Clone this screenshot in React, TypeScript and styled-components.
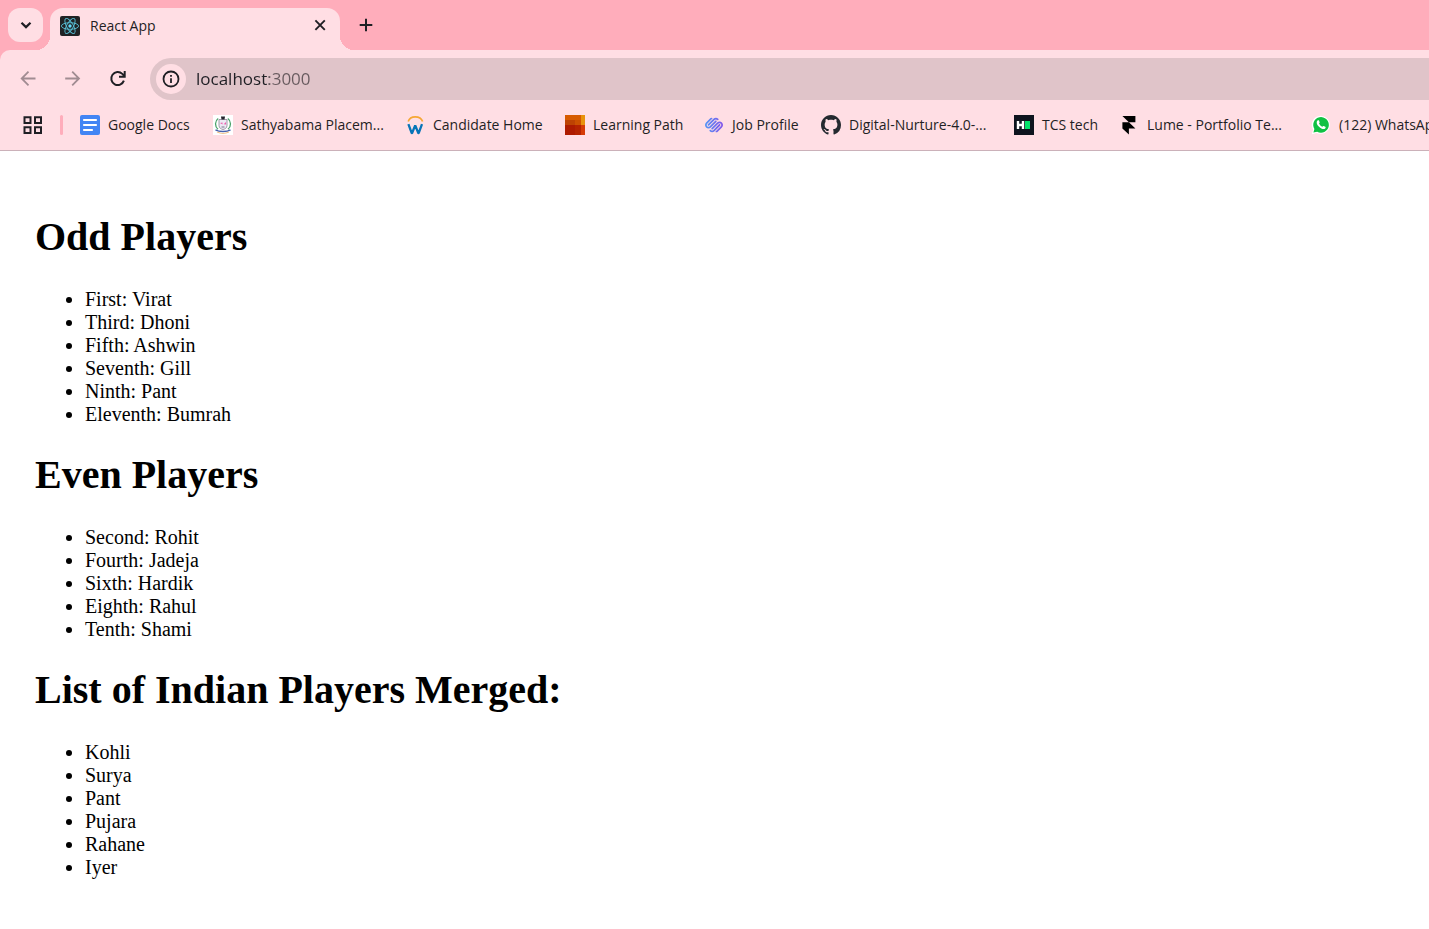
import React from 'react';
import styled, { createGlobalStyle } from 'styled-components';
import { SiSquarespace } from 'react-icons/si';

const GlobalStyle = createGlobalStyle`
  * { box-sizing: border-box; }
  body { margin: 0; background: #ffffff; }
`;

const uiFont = `"Open Sans", "Noto Sans", sans-serif`;
const strip = '#ffadbb';
const surface = '#ffdee4';
const ink = '#1f1f24';

const TabStrip = styled.div`
  display: flex;
  align-items: flex-end;
  height: 50px;
  padding-left: 8px;
  background: ${strip};
  font-family: ${uiFont};
`;

const IconButton = styled.button<{ $muted?: boolean }>`
  display: flex;
  align-items: center;
  justify-content: center;
  flex: none;
  width: 45px;
  height: 42px;
  padding: 0;
  border: 0;
  background: none;
  color: ${(p) => (p.$muted ? '#a18c92' : ink)};
`;

const SearchTabs = styled(IconButton)`
  width: 35px;
  height: 34px;
  margin: 0 7px 8px 0;
  border-radius: 12px;
  background: ${surface};
`;

const Tab = styled.div`
  position: relative;
  display: flex;
  align-items: center;
  width: 290px;
  height: 42px;
  padding: 0 6px 6px 10px;
  border-radius: 13px 13px 0 0;
  background: ${surface};
  color: ${ink};
  font-size: 14px;
  line-height: 20px;

  &::before,
  &::after {
    content: '';
    position: absolute;
    bottom: 0;
    width: 14px;
    height: 14px;
  }
  &::before {
    right: 100%;
    background: radial-gradient(circle at 0 0, transparent 14px, ${surface} 14px);
  }
  &::after {
    left: 100%;
    background: radial-gradient(circle at 100% 0, transparent 14px, ${surface} 14px);
  }
`;

const TabTitle = styled.span`
  flex: 1;
  margin-left: 10px;
`;

const TabClose = styled(IconButton)`
  width: 28px;
  height: 28px;
`;

const NewTab = styled(IconButton)`
  width: 32px;
  height: 34px;
  margin: 0 0 8px 10px;
`;

const ToolbarBack = styled.div`
  background: ${strip};
`;

const Toolbar = styled.div`
  overflow: hidden;
  border-radius: 10px 0 0 0;
  border-bottom: 1px solid #cbb1b9;
  background: ${surface};
  font-family: ${uiFont};
`;

const NavRow = styled.div`
  display: flex;
  align-items: center;
  padding: 8px 0 0 5px;
`;

const AddressBar = styled.div`
  display: flex;
  align-items: center;
  flex: 1;
  height: 42px;
  margin-left: 10px;
  padding-left: 6px;
  border-radius: 21px 0 0 21px;
  background: #e0c4c9;
`;

const SiteInfo = styled(IconButton)`
  width: 30px;
  height: 30px;
  border-radius: 50%;
  background: ${surface};
`;

const AddressInput = styled.input`
  flex: 1;
  min-width: 0;
  height: 28px;
  margin-left: 10px;
  padding: 0;
  border: 0;
  outline: 0;
  font: 17px/28px ${uiFont};
  color: ${ink};
  background: linear-gradient(90deg, ${ink} 73px, #675a5e 73px);
  -webkit-background-clip: text;
  background-clip: text;
  -webkit-text-fill-color: transparent;
`;

const BookmarkBar = styled.nav`
  display: flex;
  align-items: center;
  height: 50px;
  padding-left: 10px;
`;

const Divider = styled.span`
  flex: none;
  width: 3px;
  height: 20px;
  margin: 0 17px 0 5px;
  border-radius: 2px;
  background: ${strip};
`;

const Bookmark = styled.a<{ $width: number }>`
  display: flex;
  align-items: center;
  gap: 8px;
  flex: none;
  width: ${(p) => p.$width}px;
  color: ${ink};
  font-size: 14px;
  line-height: 20px;
  white-space: nowrap;
  text-decoration: none;

  svg { flex: none; }
`;

const Content = styled.main`
  padding: 63px 35px 48px;
  color: #000000;
  font: 20px/23px "Liberation Serif", serif;
`;

const Heading = styled.h1`
  margin: 0 0 28px;
  font-size: 40px;
  line-height: 46px;
`;

const PlayerList = styled.ul`
  margin: 0 0 26px;
  padding-left: 50px;
`;

const ReactLogo = () => (
  <svg width="20" height="20" viewBox="0 0 20 20" aria-hidden="true">
    <rect width="20" height="20" rx="2" fill="#202224" />
    <g fill="none" stroke="#58bfd6" strokeWidth="0.9">
      <ellipse cx="10" cy="10" rx="8.6" ry="3.3" />
      <ellipse cx="10" cy="10" rx="8.6" ry="3.3" transform="rotate(60 10 10)" />
      <ellipse cx="10" cy="10" rx="8.6" ry="3.3" transform="rotate(120 10 10)" />
    </g>
    <circle cx="10" cy="10" r="1.7" fill="#61dafb" />
  </svg>
);

const line = { fill: 'none', stroke: 'currentColor', 'aria-hidden': true } as const;

const ChevronIcon = () => (
  <svg width="20" height="20" viewBox="0 0 20 20" strokeWidth="2.2" {...line}>
    <path d="M5.5 7.7 10 12.1 14.5 7.7" />
  </svg>
);
const CloseIcon = () => (
  <svg width="16" height="16" viewBox="0 0 16 16" strokeWidth="1.9" {...line}>
    <path d="M3.4 2.4 12.8 11.8M12.8 2.4 3.4 11.8" />
  </svg>
);
const PlusIcon = () => (
  <svg width="16" height="16" viewBox="0 0 16 16" strokeWidth="2" {...line}>
    <path d="M8 1.7V14.3M1.7 8H14.3" />
  </svg>
);
const ArrowIcon = ({ forward }: { forward?: boolean }) => (
  <svg width="20" height="20" viewBox="0 0 20 20" strokeWidth="1.8" {...line}>
    <path d={forward ? 'M2.2 9.5H16.2M9.2 2.7 16 9.5 9.2 16.3' : 'M17.5 9.5H3.5M10.5 2.7 3.7 9.5 10.5 16.3'} />
  </svg>
);
const ReloadIcon = () => (
  <svg width="20" height="20" viewBox="0 0 20 20" strokeWidth="2" {...line}>
    <path d="M15.9 11.7A6.5 6.5 0 1 1 14.3 4.9L16.5 7.1M16.7 2V7.7H11" />
  </svg>
);
const InfoIcon = () => (
  <svg width="18" height="18" viewBox="0 0 18 18" {...line}>
    <circle cx="9" cy="9" r="7.5" strokeWidth="1.8" />
    <path d="M9 8.2V13M9 5V6.8" strokeWidth="1.8" />
  </svg>
);
const AppsIcon = () => (
  <svg width="20" height="20" viewBox="0 0 20 20" strokeWidth="2" {...line}>
    <path d="M1.5 2.3H7.5V8.1H1.5ZM12 2.3H18V8.1H12ZM1.5 12.3H7.5V18.1H1.5ZM12 12.3H18V18.1H12Z" />
  </svg>
);

const DocsIcon = () => (
  <svg width="20" height="20" viewBox="0 0 20 20">
    <rect width="20" height="20" rx="2" fill="#4285f4" />
    <path d="M4 5H16M4 10H16M4 15H12" stroke="#fff" strokeWidth="2.2" strokeLinecap="round" />
  </svg>
);
const CrestIcon = () => (
  <svg width="20" height="20" viewBox="0 0 20 20">
    <rect width="20" height="20" fill="#fff" />
    <path d="M5.2 3.5C1.7 6 1.6 11.5 5 14.2M14.8 3.5C18.3 6 18.4 11.5 15 14.2" fill="none" stroke="#4ea56d" strokeWidth="1.3" />
    <path d="M6 4.5H14V10.5C14 13 12 14 10 14.5C8 14 6 13 6 10.5Z" fill="#eceaf4" stroke="#8b8596" strokeWidth=".8" />
    <path d="M8 1.5H12L11.5 4.5H8.5Z" fill="#25232c" />
    <path d="M7 8 9.5 7.4V9.6ZM13 7 10.7 9.2 13 9.5Z" fill="#ee5eae" />
    <path d="M8.5 12H11.5" stroke="#79728a" />
    <path d="M2.5 14.8C6 17 14 17 17.5 14.8" fill="none" stroke="#4661ae" strokeWidth="1.4" />
    <path d="M4 17.1C8 18.9 12 18.9 16 17.1" fill="none" stroke="#f0c38d" strokeWidth="1.1" />
  </svg>
);
const WorkdayIcon = () => (
  <svg width="20" height="20" viewBox="0 0 20 20" fill="none">
    <path d="M3.2 6.6C4.3 3.3 7 1.8 10.2 1.8S16.5 3.3 17.6 6.6" stroke="#f6a735" strokeWidth="1.7" />
    <path d="M3.4 9.2 6.7 18.2H7L10.2 10.4 13.4 18.2H13.7L17 9.2" stroke="#0875b8" strokeWidth="2.3" strokeLinejoin="bevel" />
  </svg>
);
const TilesIcon = () => (
  <svg width="20" height="20" viewBox="0 0 20 20">
    <rect width="20" height="20" fill="#d75a00" />
    <path d="M16 0H20V10H16Z" fill="#e8920c" />
    <path d="M0 5H10V10H0Z" fill="#bd4203" />
    <path d="M10 5H16V10H10Z" fill="#cc5000" />
    <path d="M0 10H16V20H0Z" fill="#ae1b00" />
    <path d="M10 10H16V20H10Z" fill="#b52300" />
    <path d="M16 10H20V20H16Z" fill="#d63a05" />
  </svg>
);
const SquarespaceIcon = () => (
  <svg width="20" height="20" viewBox="0 0 20 20">
    <defs>
      <linearGradient id="ribbon" x1="0" y1="0" x2="1" y2="0">
        <stop offset="0" stopColor="#5296f5" />
        <stop offset="1" stopColor="#8355ea" />
      </linearGradient>
    </defs>
    <SiSquarespace x="1" y="1" size={18} fill="url(#ribbon)" />
  </svg>
);
const GitHubIcon = () => (
  <svg width="20" height="20" viewBox="0 0 16 16" fill="#24292f">
    <path d="M8 0C3.58 0 0 3.58 0 8c0 3.54 2.29 6.53 5.47 7.59.4.07.55-.17.55-.38 0-.19-.01-.82-.01-1.49-2.01.37-2.53-.49-2.69-.94-.09-.23-.48-.94-.82-1.13-.28-.15-.68-.52-.01-.53.63-.01 1.08.58 1.23.82.72 1.21 1.87.87 2.33.66.07-.52.28-.87.51-1.07-1.78-.2-3.64-.89-3.64-3.95 0-.87.31-1.59.82-2.15-.08-.2-.36-1.02.08-2.12 0 0 .67-.21 2.2.82.64-.18 1.32-.27 2-.27s1.36.09 2 .27c1.53-1.04 2.2-.82 2.2-.82.44 1.1.16 1.92.08 2.12.51.56.82 1.27.82 2.15 0 3.07-1.87 3.75-3.65 3.95.29.25.54.73.54 1.48 0 1.07-.01 1.93-.01 2.2 0 .21.15.46.55.38A8.01 8.01 0 0 0 16 8c0-4.42-3.58-8-8-8Z" />
  </svg>
);
const HackerRankIcon = () => (
  <svg width="20" height="20" viewBox="0 0 20 20">
    <rect width="20" height="20" fill="#0e141e" />
    <path d="M4 6V14M9 6V14M4 10H9" stroke="#fff" strokeWidth="2.4" />
    <rect x="11" y="6" width="5" height="8" fill="#05e26b" />
  </svg>
);
const FramerIcon = () => (
  <svg width="20" height="20" viewBox="0 0 20 20" fill="#000">
    <path d="M3.4 1H16.4V7.2H9.9ZM3.4 7.2H9.9L16.4 13.4H9.9V19.4L3.4 13.4Z" />
  </svg>
);
const WhatsAppIcon = () => (
  <svg width="20" height="20" viewBox="0 0 20 20">
    <path d="M.8 19.2 2.1 14.5A9 9 0 1 1 5.8 17.9Z" fill="#fff" />
    <path d="M2.4 17.6 3.4 14A7.8 7.8 0 1 1 6.2 16.7Z" fill="#10c143" />
    <path d="M6.5 5.5C7 5 7.8 5 8 5.6L8.6 7.2C8.8 7.7 8.2 8.2 8 8.5C8.8 10.2 9.8 11 11.4 11.8C11.8 11.5 12.2 10.8 12.7 11L14.3 11.8C14.9 12.1 14.6 13 14.2 13.4C12.8 14.7 10.7 13.8 9.2 12.7C7.2 11.2 5.5 9.2 5.7 7.2C5.8 6.5 6 6 6.5 5.5Z" fill="#fff" />
  </svg>
);

const bookmarks = [
  { label: 'Google Docs', width: 133, Icon: DocsIcon },
  { label: 'Sathyabama Placem...', width: 192, Icon: CrestIcon },
  { label: 'Candidate Home', width: 160, Icon: WorkdayIcon },
  { label: 'Learning Path', width: 139, Icon: TilesIcon },
  { label: 'Job Profile', width: 117, Icon: SquarespaceIcon },
  { label: 'Digital-Nurture-4.0-...', width: 193, Icon: GitHubIcon },
  { label: 'TCS tech', width: 105, Icon: HackerRankIcon },
  { label: 'Lume - Portfolio Te...', width: 192, Icon: FramerIcon },
  { label: '(122) WhatsApp', width: 160, Icon: WhatsAppIcon },
];

const sections = [
  {
    title: 'Odd Players',
    players: ['First: Virat', 'Third: Dhoni', 'Fifth: Ashwin', 'Seventh: Gill', 'Ninth: Pant', 'Eleventh: Bumrah'],
  },
  {
    title: 'Even Players',
    players: ['Second: Rohit', 'Fourth: Jadeja', 'Sixth: Hardik', 'Eighth: Rahul', 'Tenth: Shami'],
  },
  {
    title: 'List of Indian Players Merged:',
    players: ['Kohli', 'Surya', 'Pant', 'Pujara', 'Rahane', 'Iyer'],
  },
];

export default function App() {
  return (
    <>
      <GlobalStyle />
      <header>
        <TabStrip>
          <SearchTabs aria-label="Search tabs"><ChevronIcon /></SearchTabs>
          <Tab>
            <ReactLogo />
            <TabTitle>React App</TabTitle>
            <TabClose aria-label="Close tab"><CloseIcon /></TabClose>
          </Tab>
          <NewTab aria-label="New tab"><PlusIcon /></NewTab>
        </TabStrip>
        <ToolbarBack>
          <Toolbar>
            <NavRow>
              <IconButton $muted aria-label="Back"><ArrowIcon /></IconButton>
              <IconButton $muted aria-label="Forward"><ArrowIcon forward /></IconButton>
              <IconButton aria-label="Reload"><ReloadIcon /></IconButton>
              <AddressBar>
                <SiteInfo aria-label="Site information"><InfoIcon /></SiteInfo>
                <AddressInput aria-label="Address" defaultValue="localhost:3000" spellCheck={false} />
              </AddressBar>
            </NavRow>
            <BookmarkBar aria-label="Bookmarks">
              <IconButton aria-label="Apps"><AppsIcon /></IconButton>
              <Divider />
              {bookmarks.map(({ label, width, Icon }) => (
                <Bookmark key={label} href="#" $width={width}>
                  <Icon />
                  {label}
                </Bookmark>
              ))}
            </BookmarkBar>
          </Toolbar>
        </ToolbarBack>
      </header>
      <Content>
        {sections.map(({ title, players }) => (
          <section key={title}>
            <Heading>{title}</Heading>
            <PlayerList>
              {players.map((player) => <li key={player}>{player}</li>)}
            </PlayerList>
          </section>
        ))}
      </Content>
    </>
  );
}
